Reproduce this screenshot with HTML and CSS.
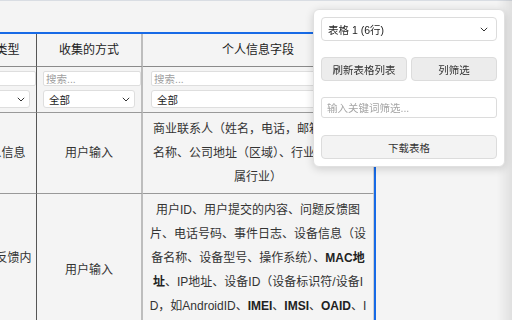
FILE: index.html
```html
<!DOCTYPE html>
<html lang="zh-cn">
<head>
    <meta charset="UTF-8">
    <title>个人信息收集清单</title>
    <link rel="stylesheet" href="styles.css">
</head>
<body>
<div class="page">
    <table class="data-table">
        <colgroup>
            <col class="col-type">
            <col class="col-way">
            <col class="col-field">
        </colgroup>
        <thead>
            <tr class="head-row">
                <th class="cell-type">个人信息类型</th>
                <th class="cell-way">收集的方式</th>
                <th class="cell-field">个人信息字段</th>
            </tr>
            <tr class="filter-row">
                <td class="cell-type">
                    <input class="filter-input" type="text" placeholder="搜索...">
                    <div class="filter-select"><span>全部</span><svg width="8" height="5" viewBox="0 0 8 5"><path d="M0.8 0.8 L4 4 L7.2 0.8" fill="none" stroke="#333" stroke-width="1"/></svg></div>
                </td>
                <td class="cell-way">
                    <input class="filter-input" type="text" placeholder="搜索...">
                    <div class="filter-select"><span>全部</span><svg width="8" height="5" viewBox="0 0 8 5"><path d="M0.8 0.8 L4 4 L7.2 0.8" fill="none" stroke="#333" stroke-width="1"/></svg></div>
                </td>
                <td class="cell-field">
                    <input class="filter-input" type="text" placeholder="搜索...">
                    <div class="filter-select"><span>全部</span><svg width="8" height="5" viewBox="0 0 8 5"><path d="M0.8 0.8 L4 4 L7.2 0.8" fill="none" stroke="#333" stroke-width="1"/></svg></div>
                </td>
            </tr>
        </thead>
        <tbody>
            <tr>
                <td class="cell-type">商业联系人信息</td>
                <td class="cell-way">用户输入</td>
                <td class="cell-field">商业联系人（姓名，电话，邮箱），公司名称、公司地址（区域）、行业信息（所属行业）</td>
            </tr>
            <tr>
                <td class="cell-type">用户的问题反馈内容</td>
                <td class="cell-way">用户输入</td>
                <td class="cell-field">用户ID、用户提交的内容、问题反馈图片、电话号码、事件日志、设备信息（设备名称、设备型号、操作系统）、<b>MAC地址</b>、IP地址、设备ID（设备标识符/设备ID，如AndroidID、<b>IMEI</b>、<b>IMSI</b>、<b>OAID</b>、IDFA等）</td>
            </tr>
        </tbody>
    </table>
</div>

<div class="tool-panel">
    <div class="panel-select"><span>表格 1 (6行)</span><svg width="8" height="5" viewBox="0 0 8 5"><path d="M0.8 0.8 L4 4 L7.2 0.8" fill="none" stroke="#333" stroke-width="1"/></svg></div>
    <div class="panel-actions">
        <button class="panel-btn">刷新表格列表</button>
        <button class="panel-btn">列筛选</button>
    </div>
    <input class="panel-input" type="text" placeholder="输入关键词筛选...">
    <button class="panel-btn panel-download">下载表格</button>
</div>
</body>
</html>
```

FILE: styles.css
```css
*{
    margin: 0;
    padding: 0;
}
html,body{
    height: 100%;
    overflow: hidden;
}
body{
    background: #f4f4f4;
    border-top: 1px solid #d9dde3;
    box-sizing: border-box;
    font-family: "Liberation Sans", "Noto Sans CJK SC", sans-serif;
    color: #333;
}
body::after{
    content: "";
    position: fixed;
    top: 0;
    right: 0;
    bottom: 0;
    width: 15px;
    background: linear-gradient(to right, rgba(0,0,0,0), rgba(0,0,0,0.08));
}
.page{
    padding-top: 33px;
}
.data-table{
    margin-left: -69px;
    width: 443px;
    table-layout: fixed;
    border-collapse: separate;
    border-spacing: 0;
    outline: 2px solid #176ae6;
    font-size: 12px;
}
.col-type{
    width: 106px;
}
.col-way{
    width: 106px;
}
.col-field{
    width: 231px;
}
.data-table th,
.data-table td{
    padding: 4px 8px;
    line-height: 24px;
    text-align: center;
    vertical-align: middle;
    border-bottom: 1px solid #999;
    font-weight: normal;
}
.data-table th{
    color: #222;
    border-bottom-color: #8a8a8a;
}
.data-table .cell-type{
    padding-left: 4px;
    padding-right: 4px;
    border-right: 1px solid #555;
}
.data-table .cell-way{
    border-right: 2px solid #bdbdbd;
}
.data-table .cell-field{
    padding-left: 5px;
    padding-right: 5px;
    border-right: 1px solid #cfcfcf;
    word-break: break-all;
}
.data-table b{
    color: #222;
}
.filter-row td{
    padding: 4px 6px;
    line-height: normal;
    text-align: left;
}
.data-table .filter-row .cell-type{
    padding: 4px 6px;
}
.data-table .filter-row .cell-field{
    padding: 4px 6px 4px 8px;
}
.filter-input{
    display: block;
    width: 100%;
    height: 13px;
    padding: 0 2px;
    border: 1px solid #dedede;
    border-radius: 2px;
    background: #fff;
    font-family: inherit;
    font-size: 10.5px;
    color: #333;
    outline: none;
}
.filter-input::placeholder{
    color: #a0a0a0;
}
.filter-select{
    display: flex;
    align-items: center;
    justify-content: space-between;
    height: 18px;
    margin-top: 4px;
    padding: 0 4px 0 5px;
    box-sizing: border-box;
    border: 1px solid #dedede;
    border-radius: 3px;
    background: #fff;
    font-size: 10.5px;
    color: #222;
}
.tool-panel{
    position: fixed;
    top: 9px;
    left: 313px;
    z-index: 2;
    width: 192px;
    box-sizing: border-box;
    padding: 7px;
    display: flex;
    flex-direction: column;
    background: #fff;
    border: 1px solid #e0e0e0;
    border-radius: 6px;
    box-shadow: 0 2px 8px rgba(0,0,0,0.16);
    font-size: 10.5px;
}
.panel-select{
    display: flex;
    align-items: center;
    justify-content: space-between;
    height: 24px;
    padding: 0 8px 0 6px;
    box-sizing: border-box;
    border: 1px solid #dcdcdc;
    border-radius: 4px;
    color: #222;
}
.panel-actions{
    display: flex;
    gap: 4px;
    margin-top: 16px;
}
.panel-btn{
    flex: 1;
    height: 24px;
    border: 1px solid #dcdcdc;
    border-radius: 4px;
    background: #ececec;
    font-family: inherit;
    font-size: 10.5px;
    color: #333;
}
.panel-input{
    margin-top: 16px;
    height: 21px;
    padding: 0 5px;
    box-sizing: border-box;
    border: 1px solid #dcdcdc;
    border-radius: 3px;
    font-family: inherit;
    font-size: 10.5px;
    outline: none;
}
.panel-input::placeholder{
    color: #a5a5a5;
}
.panel-download{
    flex: none;
    margin-top: 17px;
    background: #f3f3f3;
}
```
